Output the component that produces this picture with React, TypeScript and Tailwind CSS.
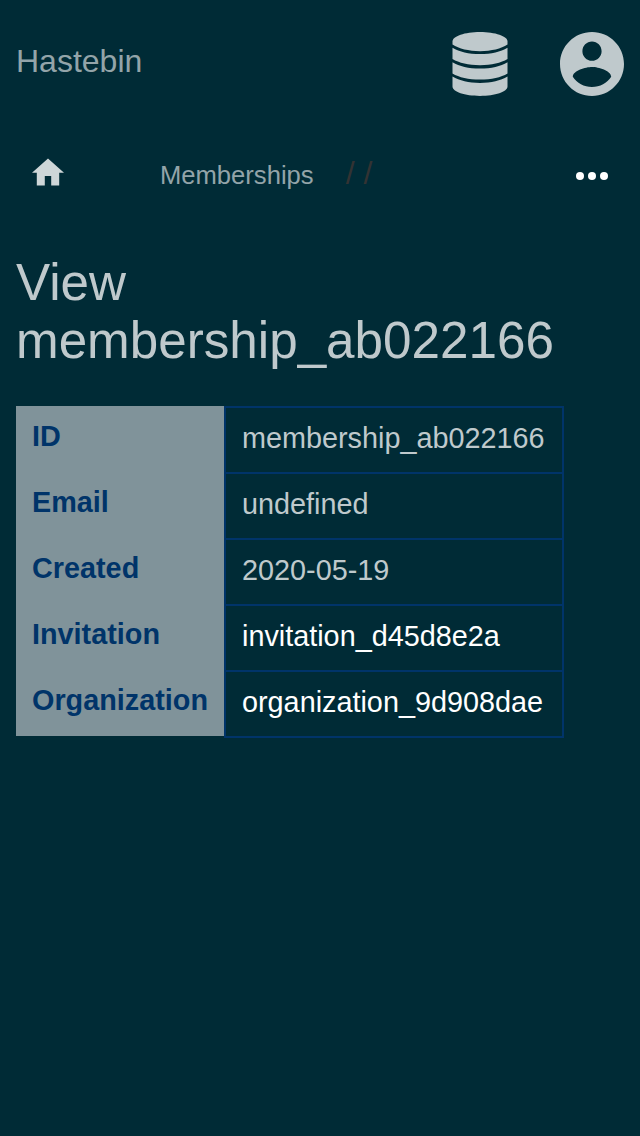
const rows = [
  { label: "ID", value: "membership_ab022166" },
  { label: "Email", value: "undefined" },
  { label: "Created", value: "2020-05-19" },
  { label: "Invitation", value: "invitation_d45d8e2a", link: true },
  { label: "Organization", value: "organization_9d908dae", link: true },
];

function DatabaseIcon() {
  return (
    <svg className="size-16" viewBox="0 0 64 64" fill="currentColor">
      <path d="M32 0C16.800 0 4.500 4.200 4.500 9.400v3.200C11 16.800 20.500 19.200 32 19.200s21 -2.400 27.500 -6.600V9.400C59.500 4.200 47.200 0 32 0z" />
      <path d="M4.500 15.700C11.500 19.900 20.500 22.100 32 22.100s20.500 -2.200 27.500 -6.400V27.100C53 31 43.500 33.200 32 33.200S11 31 4.500 27.100z" />
      <path d="M4.500 30.200C11.500 34.300 20.500 36.500 32 36.500s20.500 -2.200 27.500 -6.300V41.400C53 45.300 43.500 47.500 32 47.500S11 45.300 4.500 41.400z" />
      <path d="M4.500 44.500C11.500 48.600 20.500 50.900 32 50.900s20.500 -2.300 27.500 -6.400V54.600C59.500 59.800 47.200 64 32 64S4.500 59.800 4.500 54.600z" />
    </svg>
  );
}

function AccountIcon() {
  return (
    <svg className="size-16" viewBox="2 2 20 20" fill="currentColor">
      <path d="M12 2C6.480 2 2 6.480 2 12s4.480 10 10 10 10-4.480 10-10S17.520 2 12 2zm0 3c1.660 0 3 1.340 3 3s-1.340 3-3 3-3-1.340-3-3 1.340-3 3-3zm0 14.200c-2.500 0-4.710-1.280-6-3.220.03-1.990 4-3.080 6-3.080 1.990 0 5.970 1.090 6 3.080-1.290 1.940-3.500 3.220-6 3.220z" />
    </svg>
  );
}

export default function App() {
  return (
    <div className="min-h-[1136px] bg-[#002b36] font-['Liberation_Sans',Arial,sans-serif] text-[#bfc9cc]">
      <header className="flex h-32 items-center justify-between px-4">
        <span className="mb-1.5 text-[32px] leading-9 text-[#93a4a9]">Hastebin</span>
        <div className="flex gap-12">
          <DatabaseIcon />
          <AccountIcon />
        </div>
      </header>

      <nav className="flex h-24 items-center px-8">
        <svg className="mb-2 h-7 w-8 text-[#ced6d8]" viewBox="2 2.750 20 17.500" fill="currentColor">
          <path d="M10 20v-6h4v6h5v-8h3L12 3 2 12h3v8z" />
        </svg>
        <span className="mb-0.5 ml-24 text-[25.600px] leading-[30px] text-[#93a4a9]">Memberships</span>
        <span className="mb-1.5 ml-8 text-[32px] leading-9 text-[#333333]">/ /</span>
        <svg className="ml-auto h-2 w-8" viewBox="0 0 32 8" fill="white">
          <circle cx="4" cy="4" r="4" />
          <circle cx="16" cy="4" r="4" />
          <circle cx="28" cy="4" r="4" />
        </svg>
      </nav>

      <main className="px-4 pt-[30px]">
        <h1 className="text-[51.200px] leading-[58px]">
          View
          <br />
          membership_ab022166
        </h1>
        <dl className="mt-9 grid w-[548px] grid-cols-[208px_340px]">
          {rows.map((row) => (
            <div key={row.label} className="col-span-2 grid h-[66px] grid-cols-subgrid">
              <dt className="h-[66px] bg-[#80939a] pt-3.5 pl-4 text-[28.800px] leading-[33px] font-bold text-[#003469]">
                {row.label}
              </dt>
              <dd
                className={`h-[68px] border-2 border-[#003469] pt-3.5 pl-4 text-[28.800px] leading-[33px] ${row.link ? "text-white" : ""}`}
              >
                {row.value}
              </dd>
            </div>
          ))}
        </dl>
      </main>
    </div>
  );
}
